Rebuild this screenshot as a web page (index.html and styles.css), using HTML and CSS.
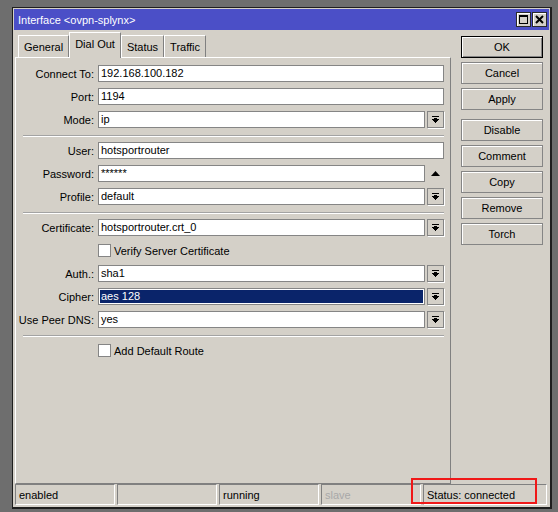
FILE: index.html
```html
<!DOCTYPE html>
<html lang="en">
<head>
    <meta charset="UTF-8">
    <title>Interface &lt;ovpn-splynx&gt;</title>
    <link rel="stylesheet" href="styles.css">
</head>
<body>
    <div class="window">
        <div class="titlebar">
            <span class="title">Interface &lt;ovpn-splynx&gt;</span>
            <div class="title-buttons">
                <span class="tbtn">
                    <svg width="9" height="9" viewBox="0 0 9 9" shape-rendering="crispEdges"><rect x="0" y="0" width="9" height="2" fill="#000"/><rect x="0.5" y="0.5" width="8" height="8" fill="none" stroke="#000"/></svg>
                </span>
                <span class="tbtn">
                    <svg width="9" height="9" viewBox="0 0 9 9"><path d="M1 1 L8 8 M8 1 L1 8" stroke="#000" stroke-width="2"/></svg>
                </span>
            </div>
        </div>

        <div class="content">
            <div class="left">
                <div class="tabs">
                    <div class="tab">General</div>
                    <div class="tab active">Dial Out</div>
                    <div class="tab">Status</div>
                    <div class="tab">Traffic</div>
                </div>

                <div class="panel">
                    <div class="form">
                        <div class="row">
                            <label>Connect To:</label>
                            <div class="field"><div class="input">192.168.100.182</div></div>
                        </div>
                        <div class="row">
                            <label>Port:</label>
                            <div class="field"><div class="input">1194</div></div>
                        </div>
                        <div class="row">
                            <label>Mode:</label>
                            <div class="field">
                                <div class="input">ip</div>
                                <span class="drop"><svg width="7" height="7" viewBox="0 0 7 7" shape-rendering="crispEdges"><rect x="0" y="0" width="7" height="1"/><rect x="2" y="2" width="3" height="1"/><path d="M0 3 H7 L3.5 7 Z"/></svg></span>
                            </div>
                        </div>

                        <div class="sep"></div>

                        <div class="row">
                            <label>User:</label>
                            <div class="field"><div class="input">hotsportrouter</div></div>
                        </div>
                        <div class="row">
                            <label>Password:</label>
                            <div class="field">
                                <div class="input">******</div>
                                <span class="arrow"><svg width="9" height="5" viewBox="0 0 9 5"><path d="M4.5 0 L9 5 H0 Z"/></svg></span>
                            </div>
                        </div>
                        <div class="row">
                            <label>Profile:</label>
                            <div class="field">
                                <div class="input">default</div>
                                <span class="drop"><svg width="7" height="7" viewBox="0 0 7 7" shape-rendering="crispEdges"><rect x="0" y="0" width="7" height="1"/><rect x="2" y="2" width="3" height="1"/><path d="M0 3 H7 L3.5 7 Z"/></svg></span>
                            </div>
                        </div>

                        <div class="sep"></div>

                        <div class="row">
                            <label>Certificate:</label>
                            <div class="field">
                                <div class="input">hotsportrouter.crt_0</div>
                                <span class="drop"><svg width="7" height="7" viewBox="0 0 7 7" shape-rendering="crispEdges"><rect x="0" y="0" width="7" height="1"/><rect x="2" y="2" width="3" height="1"/><path d="M0 3 H7 L3.5 7 Z"/></svg></span>
                            </div>
                        </div>
                        <div class="row">
                            <label></label>
                            <div class="field check-field">
                                <span class="check"></span>
                                <span>Verify Server Certificate</span>
                            </div>
                        </div>
                        <div class="row">
                            <label>Auth.:</label>
                            <div class="field">
                                <div class="input">sha1</div>
                                <span class="drop"><svg width="7" height="7" viewBox="0 0 7 7" shape-rendering="crispEdges"><rect x="0" y="0" width="7" height="1"/><rect x="2" y="2" width="3" height="1"/><path d="M0 3 H7 L3.5 7 Z"/></svg></span>
                            </div>
                        </div>
                        <div class="row">
                            <label>Cipher:</label>
                            <div class="field">
                                <div class="input selected">aes 128</div>
                                <span class="drop"><svg width="7" height="7" viewBox="0 0 7 7" shape-rendering="crispEdges"><rect x="0" y="0" width="7" height="1"/><rect x="2" y="2" width="3" height="1"/><path d="M0 3 H7 L3.5 7 Z"/></svg></span>
                            </div>
                        </div>
                        <div class="row">
                            <label>Use Peer DNS:</label>
                            <div class="field">
                                <div class="input">yes</div>
                                <span class="drop"><svg width="7" height="7" viewBox="0 0 7 7" shape-rendering="crispEdges"><rect x="0" y="0" width="7" height="1"/><rect x="2" y="2" width="3" height="1"/><path d="M0 3 H7 L3.5 7 Z"/></svg></span>
                            </div>
                        </div>

                        <div class="sep"></div>

                        <div class="row">
                            <label></label>
                            <div class="field check-field">
                                <span class="check"></span>
                                <span>Add Default Route</span>
                            </div>
                        </div>
                    </div>
                </div>
            </div>

            <div class="actions">
                <button class="btn default">OK</button>
                <button class="btn">Cancel</button>
                <button class="btn">Apply</button>
                <button class="btn group">Disable</button>
                <button class="btn">Comment</button>
                <button class="btn">Copy</button>
                <button class="btn">Remove</button>
                <button class="btn">Torch</button>
            </div>
        </div>

        <div class="statusbar">
            <div class="cell">enabled</div>
            <div class="cell"></div>
            <div class="cell">running</div>
            <div class="cell muted">slave</div>
            <div class="cell wide">Status: connected</div>
        </div>

        <!-- marca roja alrededor del estado -->
        <div class="highlight"></div>
    </div>
</body>
</html>
```

FILE: styles.css
```css
* {
    box-sizing: border-box;
}

body {
    margin: 0;
    padding: 7px 0 0 12px;
    background-color: #6e6e6e;
    font-family: "Liberation Sans", Arial, sans-serif;
    font-size: 11px;
    color: #000;
}

/* Ventana */
.window {
    position: relative;
    width: 540px;
    height: 502px;
    display: flex;
    flex-direction: column;
    background-color: #d4d0c8;
    border: 1px solid #1e1e1e;
    border-right-width: 2px;
    border-bottom-width: 2px;
}

.titlebar {
    height: 21px;
    margin: 1px 1px 0;
    padding: 0 2px 0 4px;
    display: flex;
    justify-content: space-between;
    background-color: #4b4fc7;
    color: #fff;
}

.title {
    padding-top: 5px;
}

.title-buttons {
    display: flex;
    gap: 1px;
    padding-top: 3px;
}

.tbtn {
    width: 15px;
    height: 15px;
    display: flex;
    align-items: center;
    justify-content: center;
    background-color: #d4d0c8;
    border: 1px solid #2a2a2a;
    box-shadow: inset 1px 1px #fff;
}

/* Contenido */
.content {
    flex: 1;
    display: flex;
    padding: 2px 7px 0 2px;
}

.left {
    width: 436px;
    display: flex;
    flex-direction: column;
}

.tabs {
    height: 25px;
    display: flex;
    align-items: flex-end;
    padding-left: 3px;
}

.tab {
    height: 22px;
    padding: 5px 5px 0;
    border-top: 1px solid #fff;
    border-left: 1px solid #fff;
    border-right: 1px solid #808080;
    background-color: #d4d0c8;
}

.tab.active {
    height: 26px;
    margin-bottom: -1px;
    padding-top: 5px;
    position: relative;
    z-index: 1;
}

.panel {
    flex: 1;
    border-top: 1px solid #fff;
    border-left: 1px solid #fff;
    border-right: 1px solid #808080;
    border-bottom: 1px solid #808080;
}

.form {
    display: flex;
    flex-direction: column;
    gap: 6px;
    padding: 7px 6px 0 0;
}

.row {
    height: 17px;
    display: flex;
    align-items: center;
    gap: 4px;
}

.row label {
    width: 78px;
    flex: none;
    text-align: right;
}

.field {
    flex: 1;
    display: flex;
    align-items: center;
    gap: 2px;
}

.input {
    flex: 1;
    height: 17px;
    padding: 0 2px;
    line-height: 15px;
    white-space: nowrap;
    background-color: #fff;
    border: 1px solid #858585;
}

.input.selected {
    background-color: #0a246a;
    color: #fff;
    box-shadow: inset 0 0 0 1px #fff;
}

.drop {
    width: 17px;
    height: 17px;
    flex: none;
    display: flex;
    align-items: center;
    justify-content: center;
    background-color: #d4d0c8;
    border: 1px solid #858585;
    box-shadow: 1px 1px 0 #fff;
}

.arrow {
    width: 17px;
    flex: none;
    display: flex;
    justify-content: center;
}

.check-field {
    gap: 3px;
}

.check {
    width: 13px;
    height: 13px;
    background-color: #fff;
    border: 1px solid #858585;
}

.sep {
    height: 2px;
    margin: 1px 0 -1px 7px;
    border-top: 1px solid #a3a3a3;
    border-bottom: 1px solid #fff;
}

/* Botones de la derecha */
.actions {
    width: 82px;
    margin-left: 10px;
    padding-top: 4px;
    display: flex;
    flex-direction: column;
    gap: 4px;
}

.btn {
    height: 22px;
    padding: 0;
    font-family: inherit;
    font-size: 11px;
    color: #000;
    background-color: #d4d0c8;
    border: 1px solid #858585;
    box-shadow: inset 1px 1px #fff;
}

.btn.default {
    border-color: #000;
    box-shadow: inset 1px 1px #fff, inset -1px -1px #858585;
}

.btn.group {
    margin-top: 5px;
}

/* Barra de estado */
.statusbar {
    height: 23px;
    display: flex;
    gap: 2px;
    padding: 0 3px 2px 2px;
}

.cell {
    width: 100px;
    padding: 4px 0 0 3px;
    border-top: 1px solid #808080;
    border-left: 1px solid #808080;
    border-bottom: 1px solid #fff;
    border-right: 1px solid #fff;
}

.cell.muted {
    color: #a8a8a8;
}

.cell.wide {
    flex: 1;
}

.highlight {
    position: absolute;
    left: 398px;
    top: 470px;
    width: 126px;
    height: 26px;
    border: 2px solid #f01818;
}
```
